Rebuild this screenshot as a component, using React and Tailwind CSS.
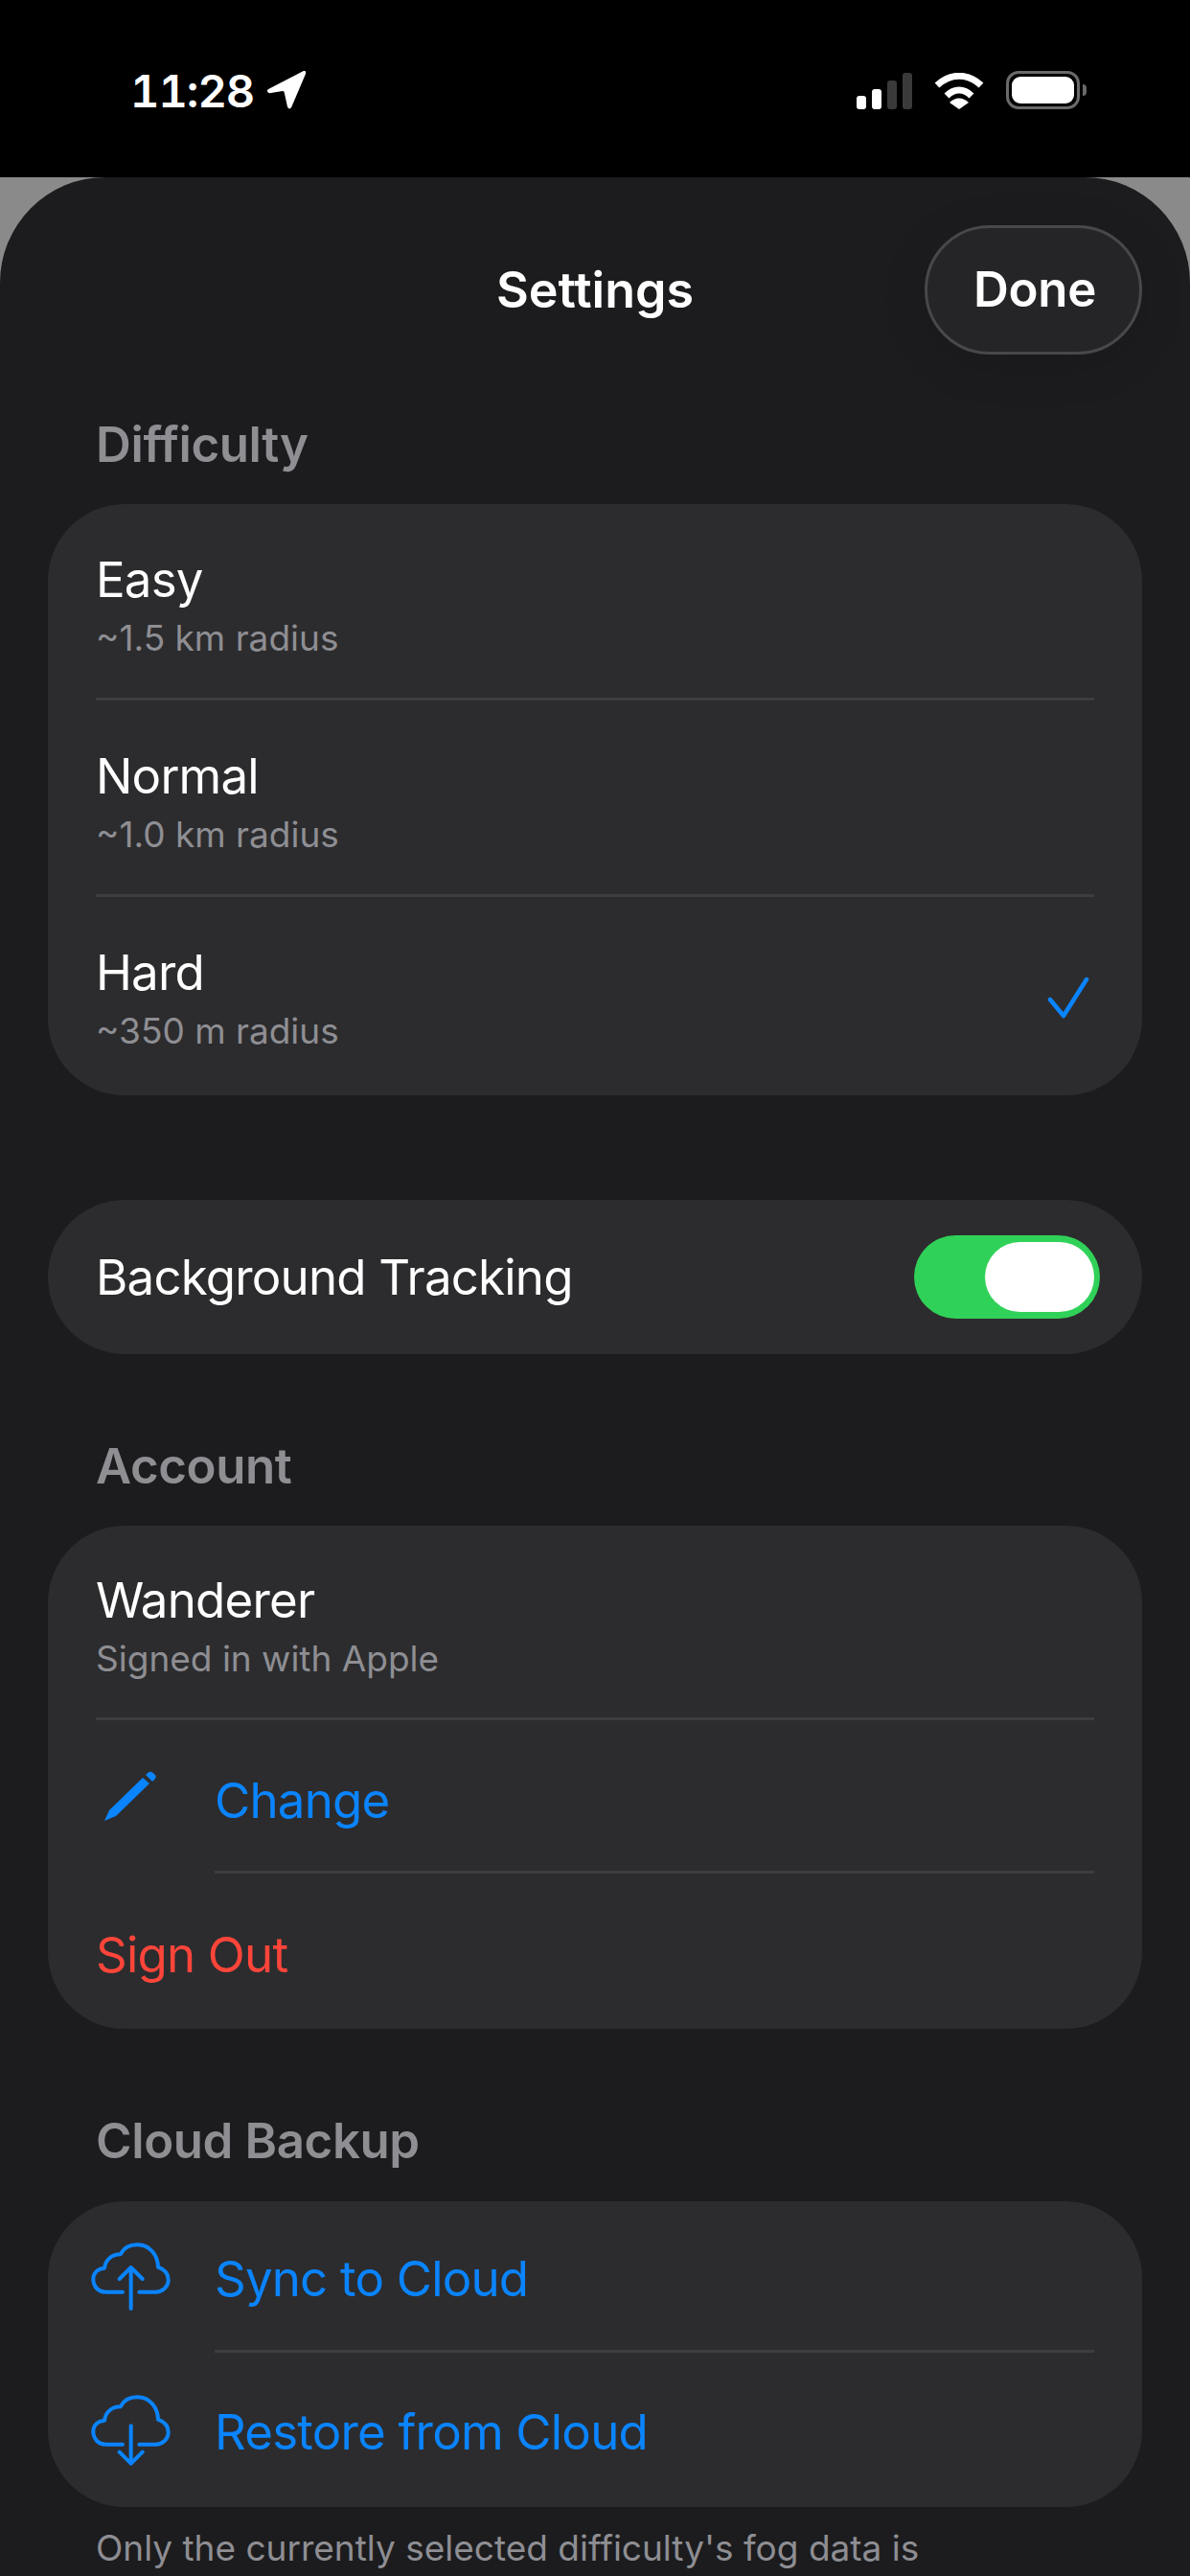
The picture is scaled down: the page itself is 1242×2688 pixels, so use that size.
import { useState } from "react";

const font = { fontFamily: "Inter, 'Noto Sans', sans-serif" };

function StatusBar() {
  return (
    <div className="flex h-[185px] items-start justify-between bg-black pl-[136px] pr-[108px] pt-[70px]">
      <div className="flex items-center gap-[12px]">
        <span className="text-[47px] leading-[50px] font-semibold tracking-[-1px] text-white tabular-nums">11:28</span>
        <svg width="44" height="44" viewBox="0 0 42 42" className="mt-[-2px]">
          <path d="M3 20 L38 2 Q41 1 40 5 L26 38 Q24 41 22 38 L19 24 Q19 22 17 22 L4 24 Q0 22 3 20 Z" fill="#fff" />
        </svg>
      </div>
      <div className="mt-[4px] flex items-end">
        <div className="flex items-end gap-[6px]">
          <div className="h-[14px] w-[10px] rounded-[3px] bg-white" />
          <div className="h-[21px] w-[10px] rounded-[3px] bg-white" />
          <div className="h-[30px] w-[10px] rounded-[3px] bg-[#3a3a3a]" />
          <div className="h-[38px] w-[10px] rounded-[3px] bg-[#3a3a3a]" />
        </div>
        <svg width="54" height="38" viewBox="0 0 54 38" className="ml-[22px]">
          <path d="M4 13 C18 0 36 0 50 13" fill="none" stroke="#fff" strokeWidth="7" strokeLinecap="butt" />
          <path d="M14 24 C22 16 32 16 40 24" fill="none" stroke="#fff" strokeWidth="7" />
          <path d="M17 31 C23 25 31 25 37 31 L27 38 Z" fill="#fff" />
        </svg>
        <div className="ml-[22px] flex items-center">
          <div className="h-[40px] w-[77px] rounded-[13px] border-[3px] border-[#6a6a6a] p-[3px]">
            <div className="h-full w-full rounded-[9px] bg-white" />
          </div>
          <div className="ml-[3px] h-[12px] w-[4px] rounded-r-full bg-[#6a6a6a]" />
        </div>
      </div>
    </div>
  );
}

function Row({ title, sub, check, divider }) {
  return (
    <div className={`relative flex ${sub === "Signed in with Apple" ? "h-[203px]" : "h-[205px]"} items-center justify-between px-[50px]`}>
      <div className="mt-[5px]">
        <div className="text-[51px] leading-[62px] tracking-[-0.8px] text-white">{title}</div>
        <div className="mt-[7px] text-[37px] leading-[46px] text-[#8e8e93]">{sub}</div>
      </div>
      {check && (
        <svg width="50" height="50" viewBox="0 0 50 50" className="mr-[1px] mt-[10px]">
          <path d="M5 24 L19 41 L43 3" fill="none" stroke="#0a84ff" strokeWidth="4.5" strokeLinecap="round" strokeLinejoin="round" />
        </svg>
      )}
      {divider && <div className="absolute inset-x-[50px] bottom-0 h-[3px] bg-[#3d3d3f]" />}
    </div>
  );
}

function CloudIcon({ up }) {
  return (
    <svg width="85" height="75" viewBox="100 115 255 225" fill="none" stroke="#0a84ff" strokeWidth="12" strokeLinecap="round" strokeLinejoin="round">
      <path d="M202 273 H150 C125 273 110 255 110 233 C110 212 125 200 145 198 C148 175 165 155 195 155 C205 135 225 125 248 125 C285 125 312 155 313 195 C335 203 345 218 345 235 C345 258 325 273 305 273 H254" />
      {up ? (
        <path d="M228 325 V198 M192 232 L228 196 L264 232" />
      ) : (
        <path d="M228 215 V330 M192 297 L228 333 L264 297" />
      )}
    </svg>
  );
}

function PencilIcon() {
  return (
    <svg width="58" height="54" viewBox="0 0 58 54">
      <path d="M2 52 L7 41 L42 7 L49 13 L14 47 Z" fill="#0a84ff" />
      <path d="M45 4 L48 1.5 Q50 0 52 1.5 L55 4 Q56.5 6 55 8 L52 11 Z" fill="#0a84ff" />
    </svg>
  );
}

function ActionRow({ icon, label, height, divider, textOffset }) {
  return (
    <div className={`relative flex ${height} items-center pl-[36px]`}>
      <div className="mr-[38px] flex w-[100px] justify-center">{icon}</div>
      <span className={`text-[51px] leading-[62px] tracking-[-0.8px] text-[#0a84ff] ${textOffset}`}>{label}</span>
      {divider && <div className="absolute bottom-0 left-[174px] right-[50px] h-[3px] bg-[#3d3d3f]" />}
    </div>
  );
}

function Heading({ children, className }) {
  return (
    <h2 className={`px-[50px] text-[51px] leading-[60px] font-semibold tracking-[-0.4px] text-[#8e8e93] ${className}`}>{children}</h2>
  );
}

export default function App() {
  const [tracking, setTracking] = useState(true);

  return (
    <div className="h-[2688px] w-[1242px] overflow-hidden bg-[#8a8a8a]" style={font}>
      <StatusBar />
      <div className="h-[2503px] rounded-t-[110px] bg-[#1c1c1e] px-[50px] pt-[50px]">
        <div className="grid grid-cols-[1fr_auto_1fr] items-center">
          <div />
          <h1 className="text-[52px] leading-[60px] font-semibold text-white">Settings</h1>
          <button
            type="button"
            className="h-[135px] w-[227px] justify-self-end rounded-full border-[3px] border-[#48484a] bg-[#252527] pl-[3px] text-[51px] font-semibold tracking-[-0.3px] text-white shadow-[0_10px_50px_rgba(0,0,0,0.12)]"
          >
            Done
          </button>
        </div>

        <Heading className="mt-[64px]">Difficulty</Heading>
        <div className="mt-[32px] rounded-[80px] bg-[#2c2c2e]">
          <Row title="Easy" sub="~1.5 km radius" divider />
          <Row title="Normal" sub="~1.0 km radius" divider />
          <div className="h-[207px]">
            <Row title="Hard" sub="~350 m radius" check />
          </div>
        </div>

        <div className="mt-[109px] flex h-[161px] items-center justify-between rounded-full bg-[#2c2c2e] pl-[50px] pr-[44px]">
          <span className="text-[51px] leading-[62px] tracking-[-0.8px] text-white">Background Tracking</span>
          <button
            type="button"
            onClick={() => setTracking((value) => !value)}
            className={`flex h-[87px] w-[194px] items-center rounded-full bg-[#30d158] px-[6px] ${tracking ? "justify-end" : "justify-start"}`}
          >
            <span className="h-[73px] w-[114px] rounded-full bg-white" />
          </button>
        </div>

        <Heading className="mt-[87px]">Account</Heading>
        <div className="mt-[32px] rounded-[80px] bg-[#2c2c2e]">
          <Row title="Wanderer" sub="Signed in with Apple" divider />
          <ActionRow icon={<PencilIcon />} label="Change" height="h-[160px]" textOffset="mt-[8px]" divider />
          <div className="flex h-[162px] items-center px-[50px]">
            <span className="mt-[8px] text-[51px] leading-[62px] tracking-[-0.8px] text-[#ff453a]">Sign Out</span>
          </div>
        </div>

        <Heading className="mt-[87px]">Cloud Backup</Heading>
        <div className="mt-[33px] rounded-[80px] bg-[#2c2c2e]">
          <ActionRow icon={<CloudIcon up />} label="Sync to Cloud" height="h-[158px]" textOffset="mt-[4px]" divider />
          <ActionRow icon={<CloudIcon />} label="Restore from Cloud" height="h-[161px]" textOffset="mt-[4px]" />
        </div>

        <p className="mt-[20px] whitespace-nowrap px-[50px] text-[37px] leading-[46px] text-[#8e8e93]">
          Only the currently selected difficulty's fog data is
        </p>
      </div>
    </div>
  );
}
